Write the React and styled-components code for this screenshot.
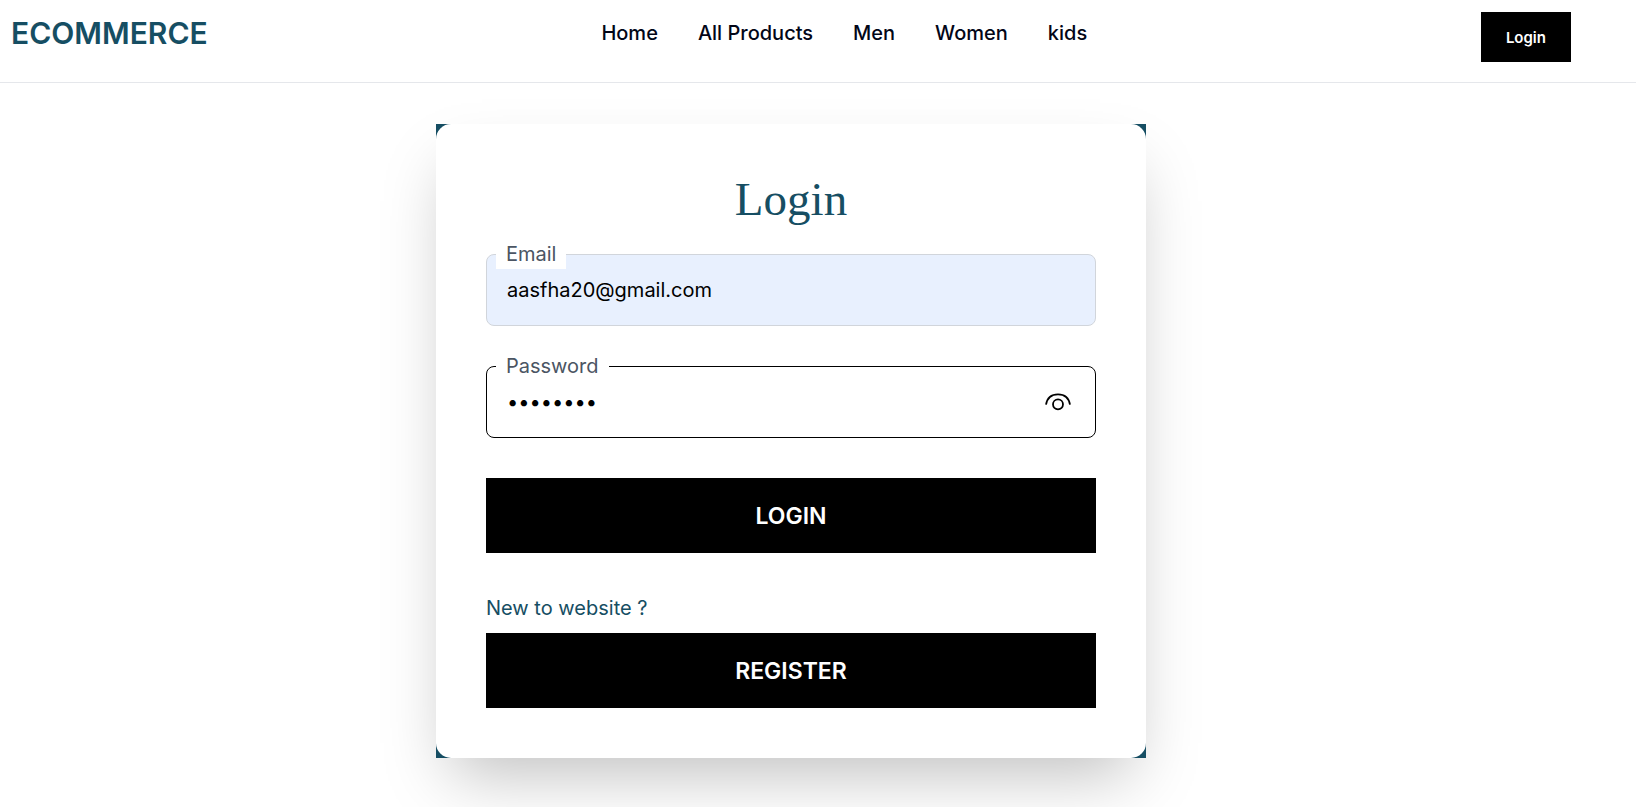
import React, { useState } from "react";
import styled, { createGlobalStyle } from "styled-components";

const GlobalStyle = createGlobalStyle`
  *, *::before, *::after { box-sizing: border-box; }
  body {
    margin: 0;
    background: #fff;
    color: #020617;
    font-family: Inter, "Liberation Sans", sans-serif;
  }
`;

const Header = styled.header`
  display: flex;
  justify-content: space-between;
  align-items: flex-start;
  padding: 12px 65px 20px 11px;
  border-bottom: 1px solid #e5e7eb;
`;

const Logo = styled.a`
  color: #164e63;
  font-size: 30px;
  line-height: 42px;
  font-weight: 600;
  text-decoration: none;
`;

const Nav = styled.nav`
  display: flex;
  gap: 40px;
`;

const NavLink = styled.a`
  color: #020617;
  font-size: 20px;
  line-height: 42px;
  font-weight: 500;
  text-decoration: none;
`;

const Button = styled.button`
  display: block;
  width: ${({ $small }) => ($small ? "auto" : "100%")};
  height: ${({ $small }) => ($small ? "50px" : "75px")};
  padding: 0 25px;
  border: 0;
  background: #000;
  color: #fff;
  font-family: inherit;
  font-size: ${({ $small }) => ($small ? "15px" : "23px")};
  font-weight: 600;
  cursor: pointer;
`;

const Main = styled.main`
  display: flex;
  justify-content: center;
  padding: 41px 54px 49px 0;
`;

const CardFrame = styled.div`
  width: 100%;
  max-width: 710px;
  background: #164e63;
  box-shadow: 0 31px 62px -15px rgba(0, 0, 0, 0.25);
`;

const Card = styled.form`
  display: flex;
  flex-direction: column;
  padding: 50px;
  border-radius: 15px;
  background: #fff;
`;

const Title = styled.h1`
  margin: 0 0 30px;
  color: #164e63;
  font-family: "Liberation Serif", serif;
  font-size: 47px;
  line-height: 50px;
  font-weight: 400;
  text-align: center;
`;

const Field = styled.div`
  position: relative;
  margin-bottom: 40px;
`;

const Label = styled.label`
  position: absolute;
  top: -15px;
  left: 10px;
  padding: 0 10px;
  background: #fff;
  color: #4b5563;
  font-size: 20px;
  line-height: 30px;
`;

const Input = styled.input`
  display: block;
  width: 100%;
  height: 72px;
  padding: 0 20px;
  border: 1px solid ${({ $filled }) => ($filled ? "#d1d5db" : "#000")};
  border-radius: 8px;
  background: ${({ $filled }) => ($filled ? "#e8f0fe" : "#fff")};
  color: #000;
  font-family: inherit;
  font-size: 20px;
  outline: 0;
`;

const EyeButton = styled.button`
  position: absolute;
  top: 20px;
  right: 22px;
  width: 32px;
  height: 32px;
  padding: 0;
  border: 0;
  background: none;
  cursor: pointer;
`;

const Hint = styled.p`
  margin: 40px 0 10px;
  color: #164e63;
  font-size: 20px;
  line-height: 30px;
`;

const EyeIcon = () => (
  <svg width="32" height="32" viewBox="0 0 32 32" fill="none" stroke="#000" strokeWidth="1.8" aria-hidden="true">
    <path d="M4 18.7C5.1 12 9.6 8.3 16 8.3S26.9 12 28 18.7" />
    <circle cx="16" cy="18.3" r="5" />
  </svg>
);

const links = ["Home", "All Products", "Men", "Women", "kids"];

export default function App() {
  const [visible, setVisible] = useState(false);
  return (
    <>
      <GlobalStyle />
      <Header>
        <Logo href="#">ECOMMERCE</Logo>
        <Nav>
          {links.map((name) => (
            <NavLink key={name} href="#">{name}</NavLink>
          ))}
        </Nav>
        <Button type="button" $small>Login</Button>
      </Header>
      <Main>
        <CardFrame>
          <Card onSubmit={(e) => e.preventDefault()}>
            <Title>Login</Title>
            <Field>
              <Input id="email" type="email" defaultValue="aasfha20@gmail.com" $filled />
              <Label htmlFor="email">Email</Label>
            </Field>
            <Field>
              <Input id="password" type={visible ? "text" : "password"} defaultValue="password" />
              <Label htmlFor="password">Password</Label>
              <EyeButton type="button" aria-label="Show password" onClick={() => setVisible(!visible)}>
                <EyeIcon />
              </EyeButton>
            </Field>
            <Button type="submit">LOGIN</Button>
            <Hint>New to website ?</Hint>
            <Button type="button">REGISTER</Button>
          </Card>
        </CardFrame>
      </Main>
    </>
  );
}
